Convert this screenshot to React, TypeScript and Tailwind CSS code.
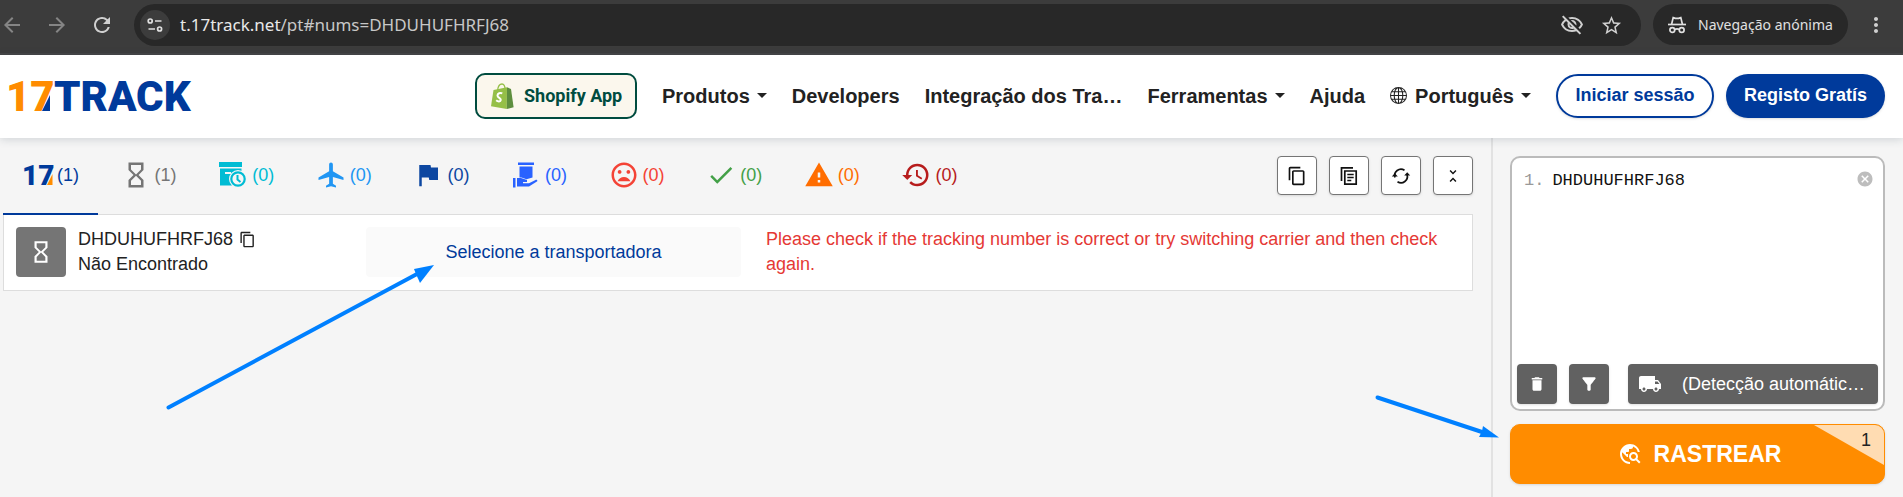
import React, { useState } from "react";
import {
  MdAirplanemodeActive,
  MdArrowBack,
  MdArrowForward,
  MdCancel,
  MdCheck,
  MdContentCopy,
  MdDelete,
  MdFilterAlt,
  MdFlag,
  MdHistory,
  MdHourglassEmpty,
  MdLocalShipping,
  MdMoreVert,
  MdOutlineMoodBad,
  MdOutlineVisibilityOff,
  MdRefresh,
  MdStarBorder,
  MdTravelExplore,
  MdUnfoldLess,
  MdWarning,
} from "react-icons/md";
import { BsGlobe } from "react-icons/bs";

function SiteSettingsIcon() {
  return (
    <svg viewBox="0 0 16 16" className="size-4" fill="none" stroke="currentColor" strokeWidth="1.7">
      <circle cx="3.2" cy="4" r="2" />
      <path d="M8 4h6.5M1.5 12H8" />
      <circle cx="12.6" cy="12" r="2" />
    </svg>
  );
}

function IncognitoIcon() {
  return (
    <svg viewBox="0 0 18 18" className="size-[18px] shrink-0" fill="none" stroke="currentColor" strokeWidth="1.7">
      <path d="M0 8.5h18" />
      <path d="M3.6 8.2 5.2 1.6l2.2.8h3.2l2.2-.8 1.6 6.6" />
      <circle cx="4.3" cy="14" r="2.4" />
      <circle cx="13.7" cy="14" r="2.4" />
      <path d="M6.7 13.6c1.4-.8 3.200-.8 4.600 0" />
    </svg>
  );
}

function BrandLogo() {
  return (
    <svg viewBox="0 0 200 60" className="h-[60px] w-[200px]" role="img" aria-label="17TRACK">
      <g fontFamily="Roboto, sans-serif" fontWeight="900" fontSize="42">
        <text x="6" y="45" fill="#ff8c00">17</text>
        <text x="54" y="45" fill="#003a9b">TRACK</text>
      </g>
      <path d="M42 45 50 29v16z" fill="#003a9b" />
    </svg>
  );
}

function TabLogo() {
  return (
    <svg viewBox="0 0 36 40" className="h-10 w-9 shrink-0" aria-hidden="true">
      <text x="2" y="30" fontFamily="Roboto, sans-serif" fontWeight="900" fontSize="28" fill="#003a9b">17</text>
      <path d="M27 30 32.500 19v11z" fill="#ff8c00" />
    </svg>
  );
}

function ShopifyBag() {
  return (
    <svg viewBox="0 0 23 26" className="h-[26px] w-[23px]" aria-hidden="true">
      <path d="M6.500 7.500C7 3.500 9 1 11 1s3 2 3.200 6" fill="none" stroke="#95bf47" strokeWidth="1.300" />
      <path d="M2.500 7 16 4.200 15.800 26 0 23.300z" fill="#95bf47" />
      <path d="M16 4.200 20 6l2.600 18.300-6.800 1.700z" fill="#5e8e3e" />
      <path d="M11.300 10.300c-2-.9-4.800 0-4.800 2.200 0 2.400 3.500 2.400 3.300 4.500-.2 1.900-3 1.700-4.600.3" fill="none" stroke="#fff" strokeWidth="2" />
    </svg>
  );
}

function InfoReceivedIcon() {
  return (
    <svg viewBox="0 0 28 28" className="size-7" aria-hidden="true">
      <path d="M0 1h23v5H0z" fill="#00bcd4" />
      <path d="M1 7.500h21.500v17H1z" fill="#00bcd4" />
      <path d="M6 11h6v2H6z" fill="#f5f5f5" />
      <circle cx="19" cy="18" r="9" fill="#f5f5f5" />
      <circle cx="19" cy="18" r="6.700" fill="#f5f5f5" stroke="#00bcd4" strokeWidth="2.200" />
      <path d="M18.500 14v4.500l3 2.500" fill="none" stroke="#00bcd4" strokeWidth="2" />
    </svg>
  );
}

function OutForDeliveryIcon() {
  return (
    <svg viewBox="0 0 28 28" className="size-7" fill="#2962ff" aria-hidden="true">
      <path d="M6 1.500h16V4H6zM7.500 5.500h13v11l-6 1.800-5-1.800h-2z" />
      <path d="M1 17h2.500v9.500H1z" />
      <path d="M5 17h4l6 2v2h-4v1.300h6l6.500-3.300c1-.4 2 .2 1.800 1.200l-8.300 5.300H5z" />
    </svg>
  );
}

function CopyListIcon() {
  return (
    <svg viewBox="0 0 20 20" className="size-5" fill="none" stroke="currentColor" strokeWidth="1.700" aria-hidden="true">
      <path d="M2.500 15V1.800h11.500" />
      <path d="M5.800 5h11.400v13.200H5.800z" />
      <path d="M8.300 8.500h6.400M8.300 11.500h6.400M8.300 14.500h4" />
    </svg>
  );
}

function SyncIcon() {
  return (
    <svg viewBox="0 0 20 20" className="size-5" fill="none" stroke="currentColor" strokeWidth="1.700" aria-hidden="true">
      <path d="M4 11.500a6.300 6.300 0 0 1 9.500-7.200M16 8.500a6.300 6.300 0 0 1-9.500 7.200" />
      <path d="M.8 10.500h6L3.800 7.300zM19.200 9.500h-6l3-3.200z" fill="currentColor" stroke="none" />
    </svg>
  );
}

function Caret() {
  return <span className="ml-[7px] border-x-[5px] border-t-[5px] border-x-transparent border-t-current" />;
}

function BrowserBar() {
  return (
    <div className="flex h-[55px] items-start border-b-2 border-[#454545] bg-[#3c3c3c] pt-1 pr-[15px] text-[#d0d0d0]">
      <div className="flex h-[42px] w-[134px] items-center gap-[21px]">
        <button aria-label="Anterior" className="text-[#858585]"><MdArrowBack className="size-6" /></button>
        <button aria-label="Seguinte" className="text-[#858585]"><MdArrowForward className="size-6" /></button>
        <button aria-label="Recarregar"><MdRefresh className="size-6" /></button>
      </div>
      <div className="flex h-[42px] flex-1 items-center rounded-full bg-[#282828] pr-[18px] pl-[6px]">
        <button aria-label="Informações do site" className="flex size-[30px] items-center justify-center rounded-full bg-[#3c3c3c] text-[#e0e0e0]">
          <SiteSettingsIcon />
        </button>
        <p className="ml-[10px] flex-1 font-['Noto_Sans',sans-serif] text-[17px] text-[#c7c7c7]">
          <span className="text-[#e8e8e8]">t.17track.net</span>/pt#nums=DHDUHUFHRFJ68
        </p>
        <button aria-label="Cookies bloqueados"><MdOutlineVisibilityOff className="size-6" /></button>
        <button aria-label="Marcador" className="ml-4"><MdStarBorder className="size-[23px]" /></button>
      </div>
      <div className="ml-3 flex h-[41px] w-[195px] items-center gap-3 rounded-full bg-[#282828] pl-[15px] text-[#e0e0e0]">
        <IncognitoIcon />
        <span className="font-['Noto_Sans',sans-serif] text-sm whitespace-nowrap">Navegação anónima</span>
      </div>
      <button aria-label="Menu" className="ml-4 flex h-[41px] items-center"><MdMoreVert className="size-6" /></button>
    </div>
  );
}

function SiteHeader() {
  return (
    <header className="relative z-10 flex h-[83px] items-center bg-white pr-[18px] pb-[2px] shadow-[0_1px_9px_rgba(40,60,80,0.2)]">
      <a href="#inicio"><BrandLogo /></a>
      <nav className="ml-auto flex items-center gap-[25px] text-xl font-bold whitespace-nowrap text-[#222]">
        <a href="#shopify" className="flex h-[46px] w-[162px] items-center gap-[10px] rounded-[10px] border-2 border-[#004c3f] bg-[#fbf7ed] pl-[14px] font-['Roboto',sans-serif] text-lg font-bold text-[#004c3f]">
          <ShopifyBag />
          Shopify App
        </a>
        <button className="flex items-center">Produtos<Caret /></button>
        <a href="#developers">Developers</a>
        <a href="#integracao">Integração dos Tra…</a>
        <button className="flex items-center">Ferramentas<Caret /></button>
        <a href="#ajuda">Ajuda</a>
        <button className="flex items-center">
          <BsGlobe className="mr-2 size-[17px]" />
          Português
          <Caret />
        </button>
      </nav>
      <div className="ml-[25px] flex gap-3 text-lg font-bold whitespace-nowrap">
        <button className="h-11 w-[158px] rounded-full border-2 border-[#003a9b] bg-white pb-[2px] text-[#003a9b] shadow">Iniciar sessão</button>
        <button className="h-11 w-[159px] rounded-full bg-[#003a9b] pb-[2px] text-white shadow">Registo Gratís</button>
      </div>
    </header>
  );
}

const tabs = [
  { label: "Todos", count: 1, tone: "text-[#003a9b]", icon: <TabLogo /> },
  { label: "Não Encontrado", count: 1, tone: "text-[#757575]", icon: <MdHourglassEmpty className="size-[30px]" /> },
  { label: "Informação recebida", count: 0, tone: "text-[#00bcd4]", icon: <InfoReceivedIcon /> },
  { label: "Em trânsito", count: 0, tone: "text-[#2196f3]", icon: <MdAirplanemodeActive className="size-[30px]" /> },
  { label: "Disponível para levantamento", count: 0, tone: "text-[#0d47a1]", icon: <MdFlag className="size-[30px]" /> },
  { label: "Em distribuição", count: 0, tone: "text-[#2962ff]", icon: <OutForDeliveryIcon /> },
  { label: "Não entregue", count: 0, tone: "text-[#f44336]", icon: <MdOutlineMoodBad className="size-[30px]" /> },
  { label: "Entregue", count: 0, tone: "text-[#43a047]", icon: <MdCheck className="size-[30px]" /> },
  { label: "Alerta", count: 0, tone: "text-[#ff6d00]", icon: <MdWarning className="size-[30px]" /> },
  { label: "Expirado", count: 0, tone: "text-[#b71c1c]", icon: <MdHistory className="size-[30px]" /> },
];

const tools = [
  { label: "Copiar números", icon: <MdContentCopy className="size-5" /> },
  { label: "Copiar resultados", icon: <CopyListIcon /> },
  { label: "Atualizar", icon: <SyncIcon /> },
  { label: "Recolher", icon: <MdUnfoldLess className="size-[18px]" /> },
];

function Results() {
  const [active, setActive] = useState(0);
  return (
    <section className="min-w-0 flex-1 pr-[18px] pl-[3px]">
      <div className="flex h-[76px] items-start justify-between">
        <div role="tablist" className="grid w-[976px] grid-cols-10">
          {tabs.map((tab, i) => (
            <button
              key={tab.label}
              role="tab"
              aria-label={tab.label}
              aria-selected={i === active}
              onClick={() => setActive(i)}
              className={`relative z-[1] mr-[3px] flex h-[77px] items-center gap-1 border-b-2 pb-[2px] pl-5 text-lg ${tab.tone} ${i === active ? "border-[#003a9b]" : "border-transparent"}`}
            >
              <span className="flex w-[30px] shrink-0 justify-center">{tab.icon}</span>({tab.count})
            </button>
          ))}
        </div>
        <div className="mt-[18px] flex gap-3">
          {tools.map((tool) => (
            <button key={tool.label} aria-label={tool.label} className="flex h-[39px] w-10 items-center justify-center rounded-sm border border-[#757575] bg-white text-[#111] shadow">
              {tool.icon}
            </button>
          ))}
        </div>
      </div>
      <article className="grid grid-cols-[350fr_375fr_719fr] border border-[#ddd] bg-white p-3 pb-[13px] text-lg leading-[25px] text-[#222]">
        <div className="flex h-[50px] items-center gap-3">
          <span className="flex size-[50px] items-center justify-center rounded bg-[#757575] text-white">
            <MdHourglassEmpty className="size-[26px]" />
          </span>
          <div>
            <p className="flex items-center gap-[6px]">
              DHDUHUFHRFJ68
              <button aria-label="Copiar número"><MdContentCopy className="size-[17px]" /></button>
            </p>
            <p>Não Encontrado</p>
          </div>
        </div>
        <button className="h-[50px] rounded bg-[#fafafa] text-[#003a9b]">Selecione a transportadora</button>
        <p className="pl-[25px] text-[#e53935]">
          Please check if the tracking number is correct or try switching carrier and then check again.
        </p>
      </article>
    </section>
  );
}

function SearchPanel() {
  const [numbers, setNumbers] = useState("DHDUHUFHRFJ68");
  return (
    <aside className="w-[412px] shrink-0 border-l-2 border-[#e2e2e2] px-[18px] pt-[18px] pl-[17px]">
      <div className="flex h-[255px] flex-col rounded-[10px] border-2 border-[#bbb] bg-white p-[5px]">
        <div className="flex flex-1 items-start pt-[5px] pr-1 pl-[7px] font-['Liberation_Mono',monospace] text-[17px] leading-[25px]">
          <span className="text-[#999]">1.</span>
          <textarea
            aria-label="Números de rastreio"
            value={numbers}
            onChange={(e) => setNumbers(e.target.value)}
            spellCheck={false}
            className="ml-2 h-full min-w-0 flex-1 resize-none text-[#111] outline-none"
          />
          <button aria-label="Limpar" onClick={() => setNumbers("")} className="flex pt-[2px] text-[#bdbdbd]">
            <MdCancel className="size-[18px]" />
          </button>
        </div>
        <div className="flex h-10 text-lg text-white">
          <button aria-label="Eliminar" className="flex w-10 items-center justify-center rounded bg-[#616161] shadow"><MdDelete className="size-[18px]" /></button>
          <button aria-label="Filtrar" className="ml-3 flex w-10 items-center justify-center rounded bg-[#616161] shadow"><MdFilterAlt className="size-5" /></button>
          <button className="ml-[19px] flex flex-1 items-center rounded bg-[#616161] pl-[10px] whitespace-nowrap shadow">
            <MdLocalShipping className="mr-5 size-6" />
            (Detecção automátic…
          </button>
        </div>
      </div>
      <button className="relative mt-[13px] flex h-[60px] w-full items-center justify-center gap-3 overflow-hidden rounded-[10px] border border-[#ff8c00] bg-[#ff8c00] pl-1 text-[23px] font-bold text-white shadow">
        <MdTravelExplore className="size-6" />
        RASTREAR
        <span className="absolute top-0 right-0 h-10 w-[70px] bg-[#ffdcb2] pt-[1px] pr-[13px] text-right text-lg font-normal text-[#222] [clip-path:polygon(0_0,100%_0,100%_100%)]">1</span>
      </button>
    </aside>
  );
}

function Arrows() {
  return (
    <>
      <svg viewBox="0 0 272 150" className="pointer-events-none absolute top-[262px] left-[165px] z-20 h-[150px] w-[272px]" fill="#0080ff" aria-hidden="true">
        <path d="M3.500 145.500 252 12" stroke="#0080ff" strokeWidth="4" strokeLinecap="round" />
        <path d="M269 3 249 7l2 5 4 9z" />
      </svg>
      <svg viewBox="0 0 128 46" className="pointer-events-none absolute top-[394px] right-[401px] z-20 h-[46px] w-[128px]" fill="#0080ff" aria-hidden="true">
        <path d="M3.500 3.500 108 38" stroke="#0080ff" strokeWidth="4" strokeLinecap="round" />
        <path d="M125 43.500 109 32l-1 5-3 6z" />
      </svg>
    </>
  );
}

export default function App() {
  return (
    <div className="relative flex min-h-screen flex-col bg-[#f5f5f5] font-['Liberation_Sans',Arial,sans-serif]">
      <BrowserBar />
      <SiteHeader />
      <main className="flex flex-1">
        <Results />
        <SearchPanel />
      </main>
      <Arrows />
    </div>
  );
}
